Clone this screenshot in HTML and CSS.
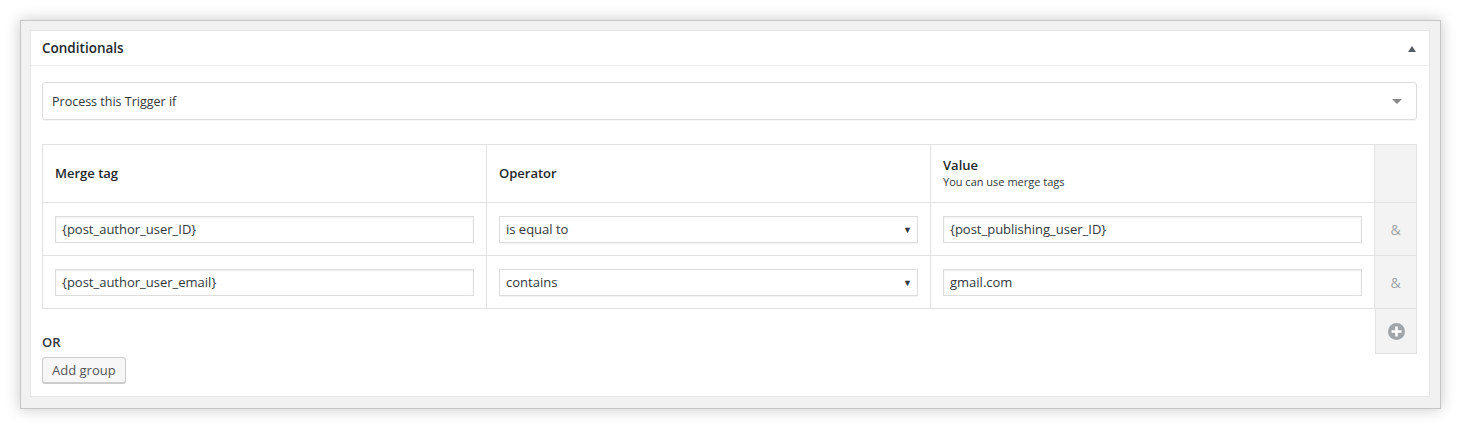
FILE: index.html
```html
<!DOCTYPE html>
<html>
<head>
<meta charset="utf-8">
<link rel="stylesheet" href="styles.css">
</head>
<body>
<div class="frame">
  <div class="postbox">
    <div class="postbox-head">
      <h2 class="postbox-title">Conditionals</h2>
      <span class="toggle-up"></span>
    </div>
    <div class="postbox-body">
      <div class="trigger-select">
        <span>Process this Trigger if</span>
        <span class="caret-down"></span>
      </div>
      <table class="cond-table">
        <thead>
          <tr>
            <th class="col">Merge tag</th>
            <th class="col">Operator</th>
            <th class="col">Value<span class="sub">You can use merge tags</span></th>
            <th class="side"></th>
          </tr>
        </thead>
        <tbody>
          <tr>
            <td><div class="field">{post_author_user_ID}</div></td>
            <td><div class="field select">is equal to<span class="mini-caret">▼</span></div></td>
            <td><div class="field">{post_publishing_user_ID}</div></td>
            <td class="side amp">&amp;</td>
          </tr>
          <tr>
            <td><div class="field">{post_author_user_email}</div></td>
            <td><div class="field select">contains<span class="mini-caret">▼</span></div></td>
            <td><div class="field">gmail.com</div></td>
            <td class="side amp">&amp;</td>
          </tr>
        </tbody>
      </table>
      <div class="footer">
        <div class="group-actions">
          <div class="or">OR</div>
          <button class="button">Add group</button>
        </div>
        <div class="add-cell">
          <svg width="17" height="17" viewBox="0 0 17 17"><circle cx="8.5" cy="8.5" r="8.5" fill="#a0a5aa"/><rect x="7.2" y="3.5" width="2.6" height="10" fill="#fff"/><rect x="3.5" y="7.2" width="10" height="2.6" fill="#fff"/></svg>
        </div>
      </div>
    </div>
  </div>
</div>
</body>
</html>
```

FILE: styles.css
```css
* { box-sizing: border-box; }
html, body { margin: 0; padding: 0; background: #fff; }
body {
  font-family: "Segoe UI", "Open Sans", "Noto Sans", sans-serif;
  font-size: 13px;
  color: #32373c;
  padding: 20px 20px 21px 20px;
}
.frame {
  width: 1421px;
  height: 389px;
  background: #f1f1f1;
  border: 1px solid #c6c6c6;
  padding: 9px 10px 11px 9px;
  box-shadow: 0 0 14px rgba(0,0,0,0.22);
}
.postbox {
  background: #fff;
  border: 1px solid #e5e5e5;
  height: 100%;
}
.postbox-head {
  display: flex;
  align-items: center;
  justify-content: space-between;
  height: 35px;
  border-bottom: 1px solid #eee;
  padding: 0 13px 0 11px;
}
.postbox-title {
  margin: 0;
  font-size: 13.5px;
  font-weight: 600;
  color: #23282d;
}
.toggle-up {
  width: 0; height: 0;
  border-left: 4.5px solid transparent;
  border-right: 4.5px solid transparent;
  border-bottom: 6px solid #555d66;
  margin-top: 1px;
}
.postbox-body {
  padding: 16px 12px 12px 11px;
}
.trigger-select {
  display: flex;
  align-items: center;
  justify-content: space-between;
  height: 38px;
  border: 1px solid #ddd;
  border-radius: 3px;
  box-shadow: 0 1px 1px rgba(0,0,0,0.04);
  padding: 0 14px 0 9px;
  font-size: 12.5px;
}
.caret-down {
  width: 0; height: 0;
  border-left: 5px solid transparent;
  border-right: 5px solid transparent;
  border-top: 5px solid #888;
}
.cond-table {
  margin-top: 24px;
  width: 1374px;
  border-collapse: collapse;
  border: 1px solid #e1e1e1;
  table-layout: fixed;
}
.cond-table th, .cond-table td {
  border: 1px solid #e1e1e1;
  padding: 0 12px;
  text-align: left;
  vertical-align: middle;
}
.cond-table th.col { width: 444px; }
.cond-table th.side, .cond-table td.side {
  width: 42px;
  background: #f3f3f3;
  padding: 0;
}
.cond-table thead tr { height: 58px; }
.cond-table th {
  font-weight: 600;
  font-size: 13px;
  color: #23282d;
  line-height: 17px;
}
.cond-table th .sub {
  display: block;
  font-weight: 400;
  font-size: 11px;
  line-height: 15px;
  color: #32373c;
  margin-bottom: 2px;
}
.cond-table tbody tr { height: 53px; }
.field {
  position: relative;
  height: 27px;
  border: 1px solid #ddd;
  box-shadow: inset 0 1px 2px rgba(0,0,0,0.07);
  padding: 0 6px;
  line-height: 25px;
  font-size: 13px;
  color: #32373c;
}
.field.select { box-shadow: 0 1px 1px rgba(0,0,0,0.04); }
.mini-caret {
  position: absolute;
  right: 5px;
  top: 0;
  font-size: 9px;
  color: #32373c;
}
.amp {
  text-align: center !important;
  color: #a0a5aa;
  font-size: 14px;
}
.footer {
  display: flex;
  justify-content: space-between;
  align-items: flex-start;
}
.group-actions {
  padding-top: 24px;
}
.or {
  font-weight: 600;
  font-size: 13px;
  line-height: 18px;
  color: #32373c;
}
.button {
  margin-top: 6px;
  height: 26px;
  padding: 0 9px;
  font-family: inherit;
  font-size: 13px;
  color: #555;
  background: #f7f7f7;
  border: 1px solid #ccc;
  border-radius: 3px;
  box-shadow: 0 1px 0 #ccc;
}
.add-cell {
  width: 42px;
  height: 45px;
  background: #f3f3f3;
  border: 1px solid #e1e1e1;
  border-top: none;
  display: flex;
  align-items: center;
  justify-content: center;
}
```
